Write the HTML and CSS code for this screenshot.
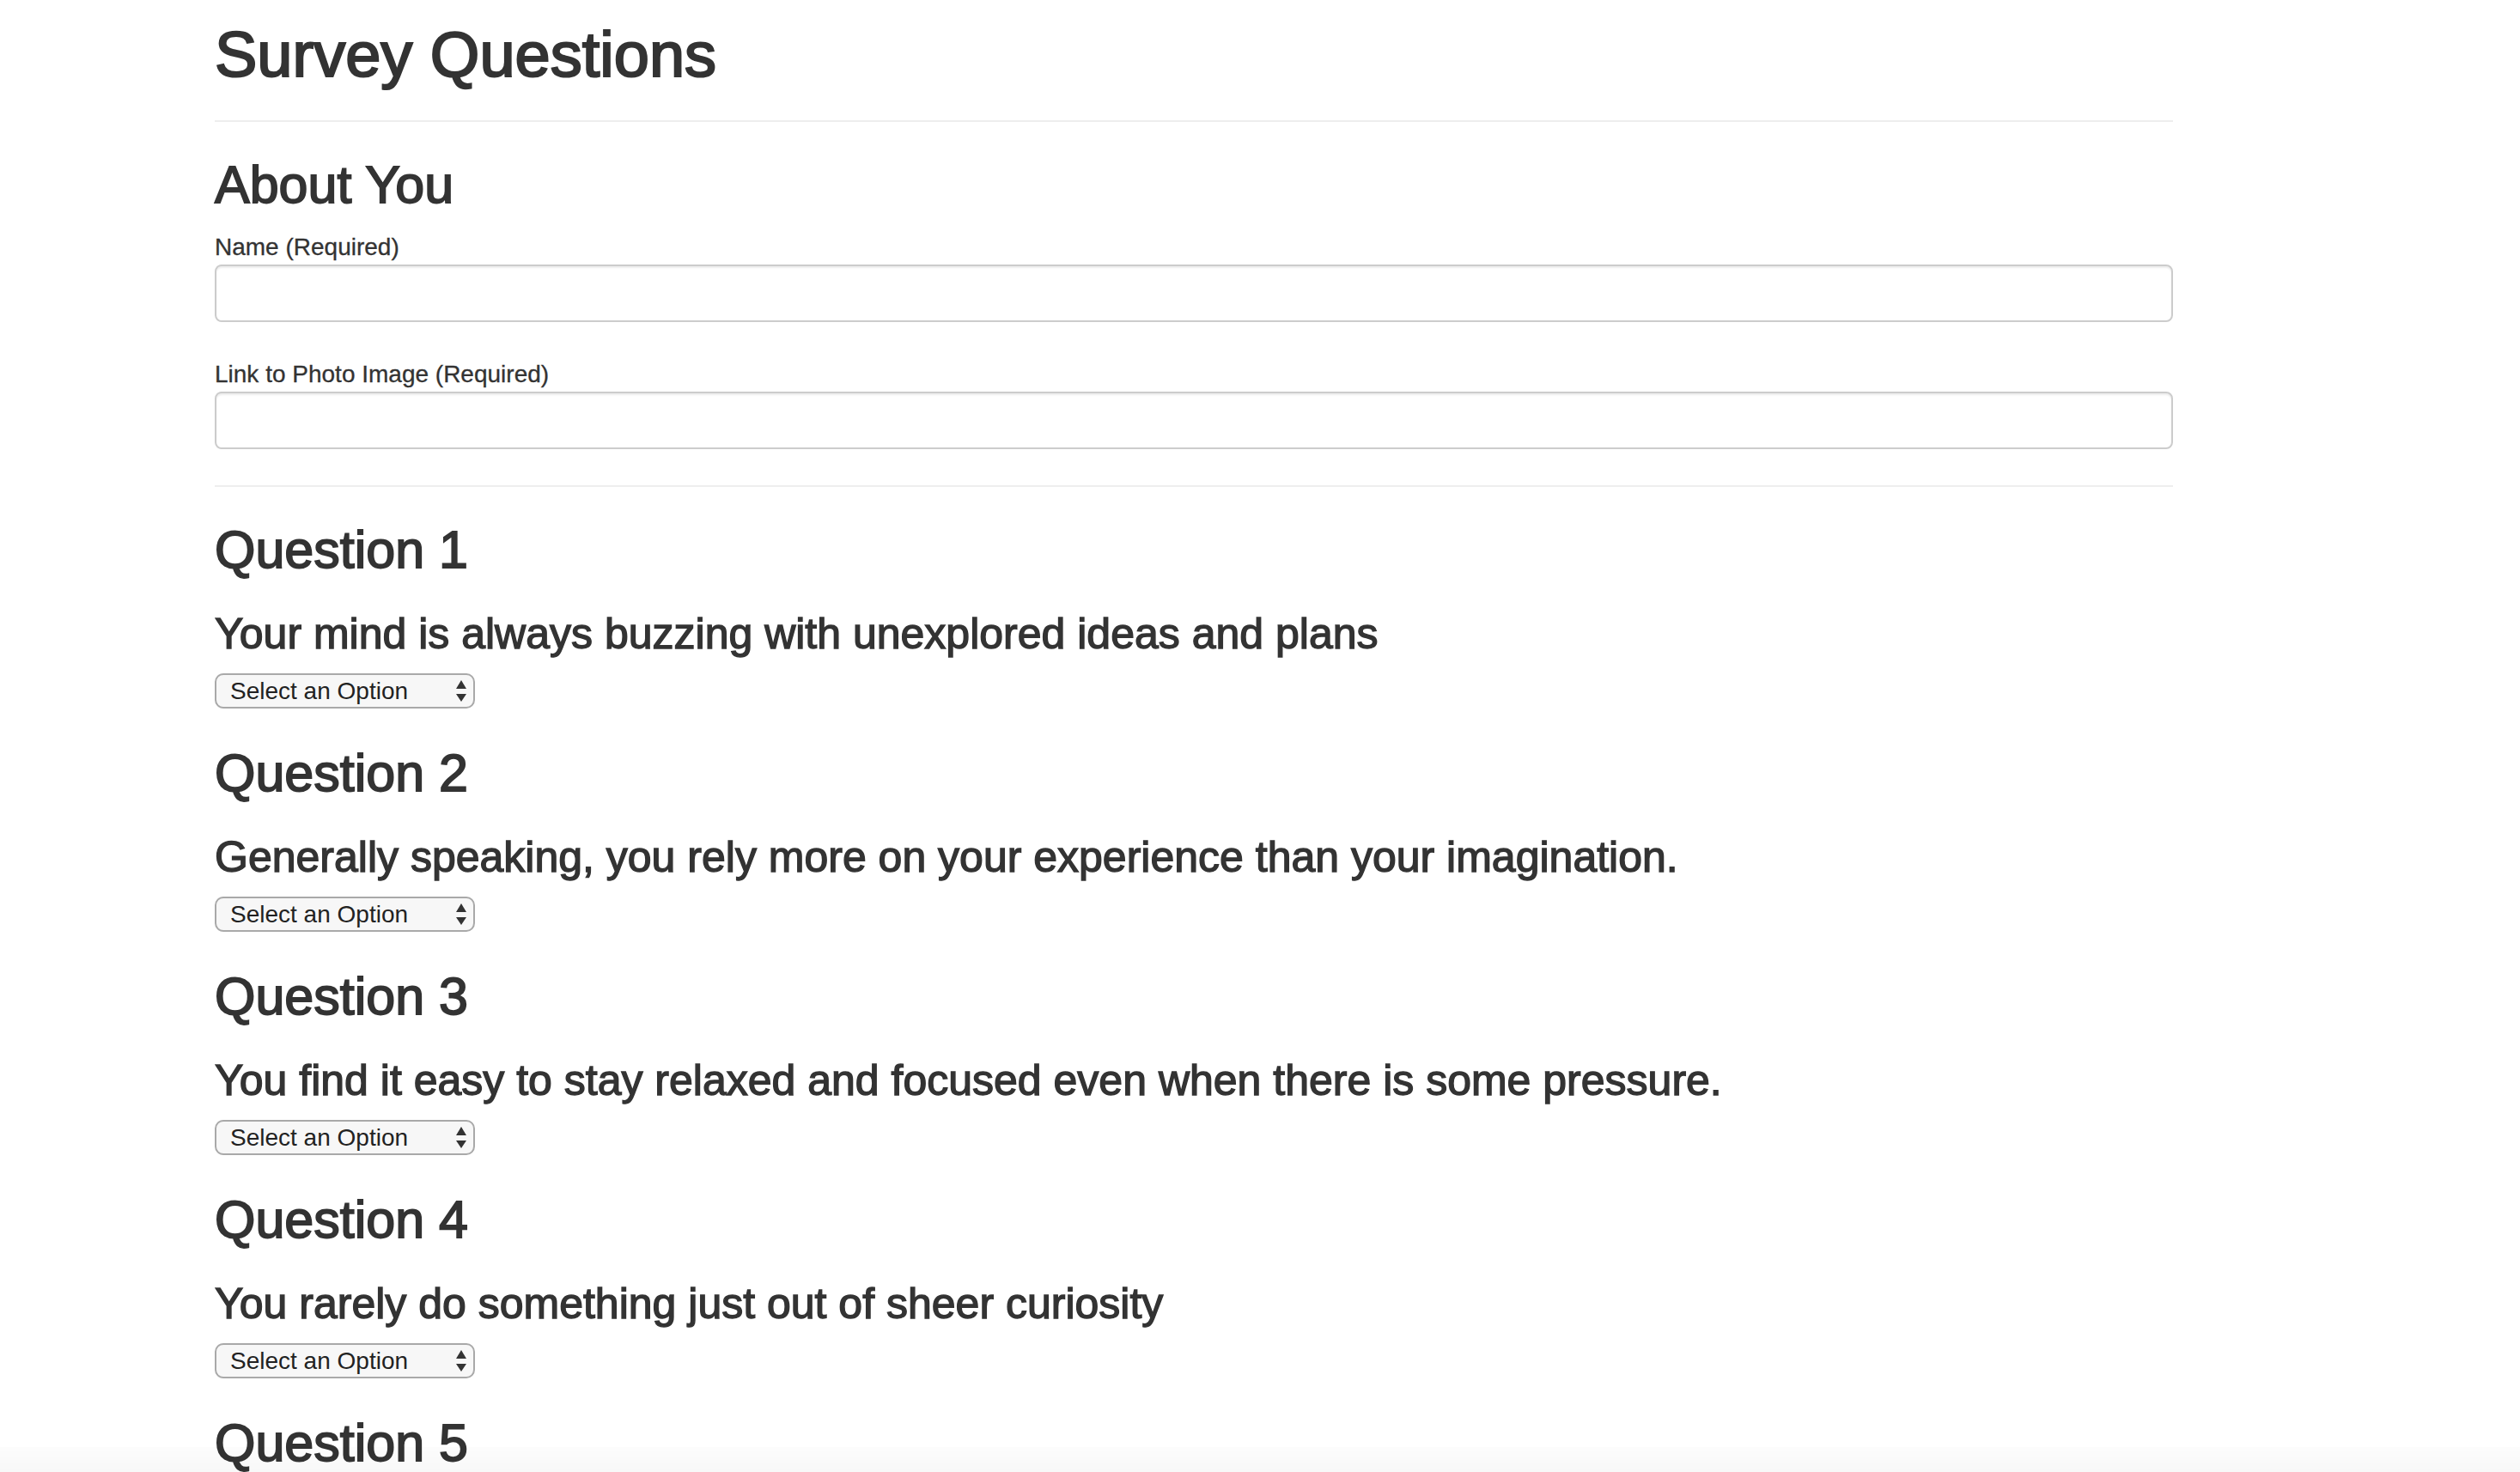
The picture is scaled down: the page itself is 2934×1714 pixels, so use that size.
FILE: index.html
```html
<!DOCTYPE html>
<html lang="en">
<head>
<meta charset="utf-8">
<title>Survey Questions</title>
<link rel="stylesheet" href="styles.css">
</head>
<body>
<div class="page">
  <h1 class="title">Survey Questions</h1>
  <hr class="rule">
  <section class="about">
    <h2 class="section-title">About You</h2>
    <div class="field">
      <label class="field-label" for="name">Name (Required)</label>
      <input class="field-input" id="name" type="text">
    </div>
    <div class="field">
      <label class="field-label" for="photo">Link to Photo Image (Required)</label>
      <input class="field-input" id="photo" type="text">
    </div>
  </section>
  <hr class="rule">
  <div class="questions">
    <section class="question">
      <h2 class="section-title">Question 1</h2>
      <h3 class="question-text">Your mind is always buzzing with unexplored ideas and plans</h3>
      <div class="select-wrap">
        <select class="answer">
          <option>Select an Option</option>
          <option>1 (Strongly Disagree)</option>
          <option>2</option>
          <option>3</option>
          <option>4</option>
          <option>5 (Strongly Agree)</option>
        </select>
        <svg class="select-arrows" width="12" height="26" viewBox="0 0 12 26"><polygon points="0,10 6,0 12,10"/><polygon points="0,16 12,16 6,25"/></svg>
      </div>
    </section>
    <section class="question">
      <h2 class="section-title">Question 2</h2>
      <h3 class="question-text">Generally speaking, you rely more on your experience than your imagination.</h3>
      <div class="select-wrap">
        <select class="answer">
          <option>Select an Option</option>
          <option>1 (Strongly Disagree)</option>
          <option>2</option>
          <option>3</option>
          <option>4</option>
          <option>5 (Strongly Agree)</option>
        </select>
        <svg class="select-arrows" width="12" height="26" viewBox="0 0 12 26"><polygon points="0,10 6,0 12,10"/><polygon points="0,16 12,16 6,25"/></svg>
      </div>
    </section>
    <section class="question">
      <h2 class="section-title">Question 3</h2>
      <h3 class="question-text">You find it easy to stay relaxed and focused even when there is some pressure.</h3>
      <div class="select-wrap">
        <select class="answer">
          <option>Select an Option</option>
          <option>1 (Strongly Disagree)</option>
          <option>2</option>
          <option>3</option>
          <option>4</option>
          <option>5 (Strongly Agree)</option>
        </select>
        <svg class="select-arrows" width="12" height="26" viewBox="0 0 12 26"><polygon points="0,10 6,0 12,10"/><polygon points="0,16 12,16 6,25"/></svg>
      </div>
    </section>
    <section class="question">
      <h2 class="section-title">Question 4</h2>
      <h3 class="question-text">You rarely do something just out of sheer curiosity</h3>
      <div class="select-wrap">
        <select class="answer">
          <option>Select an Option</option>
          <option>1 (Strongly Disagree)</option>
          <option>2</option>
          <option>3</option>
          <option>4</option>
          <option>5 (Strongly Agree)</option>
        </select>
        <svg class="select-arrows" width="12" height="26" viewBox="0 0 12 26"><polygon points="0,10 6,0 12,10"/><polygon points="0,16 12,16 6,25"/></svg>
      </div>
    </section>
    <section class="question">
      <h2 class="section-title">Question 5</h2>
    </section>
  </div>
</div>
<div class="bottom-fade"></div>
</body>
</html>
```

FILE: styles.css
```css
html, body {
  margin: 0;
  padding: 0;
  background: #ffffff;
}

body {
  font-family: "Liberation Sans", Arial, Helvetica, sans-serif;
  color: #333333;
  overflow: hidden;
}

.page {
  width: 2280px;
  margin-left: 250px;
}

.title {
  margin: 23px 0 0;
  font-size: 74px;
  line-height: 81px;
  font-weight: 400;
  -webkit-text-stroke: 2.2px #333333;
}

.rule {
  height: 0;
  border: 0;
  border-top: 2px solid #eeeeee;
  margin: 36px 0 40px;
}

.section-title {
  margin: 0;
  font-size: 61px;
  line-height: 67px;
  font-weight: 400;
  -webkit-text-stroke: 1.8px #333333;
}

.about {
  margin-bottom: 42px;
}

.about .section-title {
  margin-bottom: 19px;
}

.field + .field {
  margin-top: 41px;
}

.field-label {
  display: block;
  font-size: 28px;
  line-height: 40px;
  font-weight: 400;
  -webkit-text-stroke: 0.3px #333333;
}

.field-input {
  display: block;
  box-sizing: border-box;
  width: 100%;
  height: 67px;
  margin: 0;
  border: 2px solid #cccccc;
  border-radius: 8px;
  background: #ffffff;
  box-shadow: inset 0 2px 2px rgba(0, 0, 0, 0.075);
  font: inherit;
  font-size: 28px;
  padding: 0 24px;
}

.questions {
  display: flex;
  flex-direction: column;
  gap: 42px;
}

.question-text {
  margin: 37px 0 18px;
  font-size: 50px;
  line-height: 55px;
  font-weight: 400;
  -webkit-text-stroke: 1.4px #333333;
}

.select-wrap {
  position: relative;
  width: 303px;
  height: 41px;
}

.answer {
  -webkit-appearance: none;
  appearance: none;
  box-sizing: border-box;
  display: block;
  width: 303px;
  height: 41px;
  margin: 0;
  padding: 0 0 0 16px;
  border: 2px solid #a9a9a9;
  border-radius: 10px;
  background: #f7f7f7;
  color: #222222;
  font-family: "Liberation Sans", Arial, Helvetica, sans-serif;
  font-size: 28px;
  line-height: 37px;
}

.select-arrows {
  position: absolute;
  left: 281px;
  top: 8px;
  fill: #333333;
  pointer-events: none;
}

.bottom-fade {
  position: fixed;
  left: 0;
  right: 0;
  bottom: 0;
  height: 29px;
  background: linear-gradient(to bottom, rgba(0, 0, 0, 0.012), rgba(0, 0, 0, 0.026));
  pointer-events: none;
}
```
